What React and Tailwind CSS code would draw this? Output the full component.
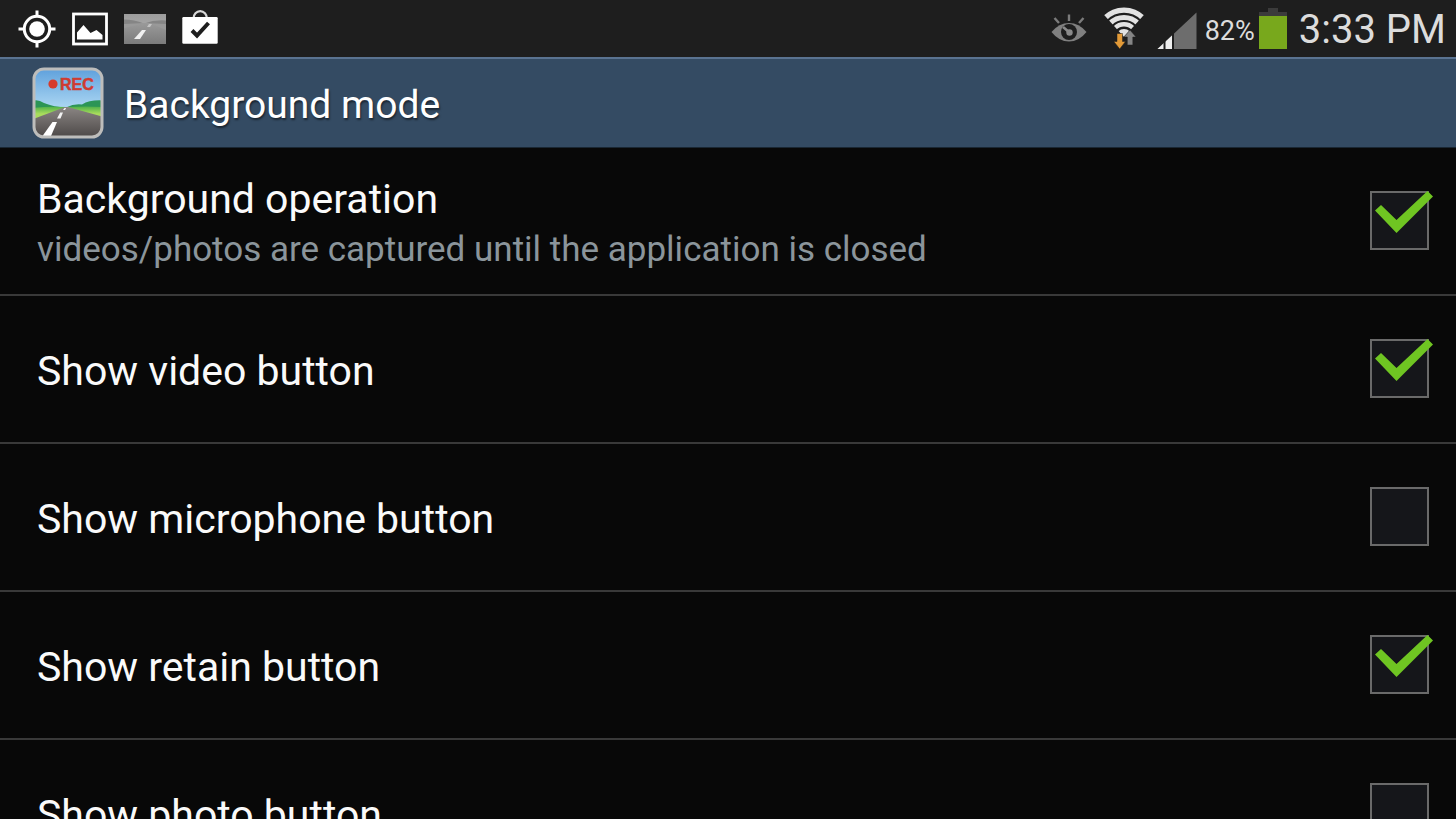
import { useState } from "react";

const OPTIONS = [
  {
    id: "background-operation",
    title: "Background operation",
    summary: "videos/photos are captured until the application is closed",
    enabled: true,
  },
  { id: "video-button", title: "Show video button", enabled: true },
  { id: "microphone-button", title: "Show microphone button", enabled: false },
  { id: "retain-button", title: "Show retain button", enabled: true },
  { id: "photo-button", title: "Show photo button", enabled: false },
];

const LocationIcon = () => (
  <svg className="w-[38px] h-[38px]" viewBox="0 0 38 38" fill="none" stroke="#fff" aria-hidden="true">
    <circle cx="19" cy="19" r="12.7" strokeWidth="3" />
    <circle cx="19" cy="19" r="7.8" fill="#fff" stroke="none" />
    <path d="M19 0.5V7M19 31v6.5M0.5 19H7M31 19h6.5" strokeWidth="3" />
  </svg>
);

const GalleryIcon = () => (
  <svg className="w-9 h-[34px]" viewBox="0 0 36 34" aria-hidden="true">
    <rect x="1.5" y="2" width="33" height="30" fill="none" stroke="#fff" strokeWidth="2.8" />
    <path d="M5 27.500V20.500L11.500 13l7 8 6-3 6 5v4.500z" fill="#fff" />
  </svg>
);

const RoadThumbnail = () => (
  <svg className="w-[42px] h-[30px]" viewBox="0 0 42 30" aria-hidden="true">
    <defs>
      <linearGradient id="thumbSky" x1="0" y1="0" x2="0" y2="1">
        <stop offset="0" stopColor="#9c9c9c" />
        <stop offset="1" stopColor="#b8b8b8" />
      </linearGradient>
      <linearGradient id="thumbRoad" x1="0" y1="0" x2="0" y2="1">
        <stop offset="0" stopColor="#9a9a9a" />
        <stop offset="1" stopColor="#7b7b7b" />
      </linearGradient>
    </defs>
    <rect width="42" height="30" fill="url(#thumbSky)" />
    <path d="M0 5.500q10 0 20 4 11-4 22-3v6H0z" fill="#858585" />
    <path d="M0 10l20-1 22 1v20H0z" fill="#999" />
    <path d="M0 14L21 9h5l16 7v14H0z" fill="url(#thumbRoad)" />
    <path d="M10 25l8-9h4l-6 9z" fill="#f0f0f0" />
    <path d="M23 13l2-3h3l-2 3z" fill="#c4c4c4" />
  </svg>
);

const StoreIcon = () => (
  <svg className="w-9 h-[39px]" viewBox="0 0 36 39" aria-hidden="true">
    <path d="M11.500 9.500a6.700 7.400 0 0 1 13.400 0" fill="none" stroke="#d8d8d8" strokeWidth="2.200" />
    <rect x="0.300" y="8" width="35.400" height="26.800" rx="1.200" fill="#fff" />
    <path d="M10 21.500l5 5 11.500-12.500" fill="none" stroke="#1e1e1e" strokeWidth="4" />
  </svg>
);

const SmartStayIcon = () => (
  <svg className="w-9 h-[30px]" viewBox="0 0 36 30" aria-hidden="true">
    <path d="M3.500 4l4.500 5M18 0.500v6.500M32.500 4L28 9" stroke="#7b7b7b" strokeWidth="2.400" />
    <path d="M0.500 18Q8 9 18 9T35.500 18Q28 27.500 18 27.500T0.500 18z" fill="#808080" />
    <circle cx="18" cy="18" r="8" fill="#1e1e1e" />
    <circle cx="18.500" cy="18.500" r="3.200" fill="#8a8a8a" />
    <path d="M12 13l6 5" stroke="#8a8a8a" strokeWidth="2.600" />
  </svg>
);

const WifiIcon = () => (
  <svg className="w-[42px] h-11" viewBox="-1 0 42 44" aria-hidden="true">
    <defs>
      <clipPath id="wifiFan">
        <path d="M20 30L-3.500 4V-4h47v8z" />
      </clipPath>
    </defs>
    <g clipPath="url(#wifiFan)" fill="none" stroke="#e2e2e2">
      <circle cx="20" cy="30" r="26.900" strokeWidth="5.400" />
      <circle cx="20" cy="30" r="19.600" strokeWidth="5" />
      <circle cx="20" cy="30" r="12.800" strokeWidth="4.400" />
      <circle cx="20" cy="30" r="8" fill="#e2e2e2" stroke="none" />
    </g>
    <path d="M13 26.500h5.500v8h3L15.700 42 9.800 34.500H13z" fill="#e39a37" stroke="#1e1e1e" strokeWidth="0.500" />
    <path d="M23.300 38v-8h-3.500L26 23l6 7h-3.200v8z" fill="#858585" stroke="#1e1e1e" strokeWidth="0.500" />
  </svg>
);

const SignalIcon = () => (
  <svg className="w-10 h-[37px]" viewBox="0 0 40 37" aria-hidden="true">
    <path d="M39.500 0.500V37H0.500z" fill="#6d6d6d" />
    <path d="M0.500 37L15 23.500V37z" fill="#eee" />
    <path d="M7.500 25v12M16 18v19" stroke="#1e1e1e" strokeWidth="2" />
  </svg>
);

const BatteryIcon = () => (
  <svg className="w-7 h-[41px]" viewBox="0 0 28 41" aria-hidden="true">
    <path d="M9 0h10v4h9v4H0V4h9z" fill="#3b3b3b" />
    <rect y="8" width="28" height="33" fill="#78a81c" />
  </svg>
);

const AppIcon = () => (
  <svg className="w-[72px] h-[72px]" viewBox="0 0 72 72" aria-hidden="true">
    <defs>
      <linearGradient id="sky" x1="0" y1="0" x2="0" y2="1">
        <stop offset="0" stopColor="#5b9edb" />
        <stop offset="0.550" stopColor="#a9d5f2" />
      </linearGradient>
      <linearGradient id="road" x1="0" y1="0" x2="0" y2="1">
        <stop offset="0" stopColor="#8a8583" />
        <stop offset="1" stopColor="#494544" />
      </linearGradient>
      <linearGradient id="grass" x1="0" y1="0" x2="0" y2="1">
        <stop offset="0" stopColor="#4fb04a" />
        <stop offset="0.500" stopColor="#a8dc5c" />
      </linearGradient>
      <clipPath id="iconFrame">
        <rect x="2" y="2" width="68" height="68" rx="9" />
      </clipPath>
    </defs>
    <g clipPath="url(#iconFrame)">
      <rect width="72" height="72" fill="url(#sky)" />
      <path d="M0 34q6-2 12 2 10 4 22 4.500 8-4 16-3 8-5 22-4v14H0z" fill="#2c9556" />
      <path d="M0 41q17-2 34-1 20-1 38 0v14H0z" fill="url(#grass)" />
      <path d="M0 52.500L33 40h3L72 50v22H0z" fill="url(#road)" />
      <path d="M10.500 69L20.500 55h4.500l-6 14z" fill="#fff" />
      <path d="M25 51.500l3.200-6h2.800l-2.500 6zM31 43l1.500-2h1.700L33 43z" fill="#f2f2f2" />
    </g>
    <rect x="2" y="2" width="68" height="68" rx="10" fill="none" stroke="#bdbdbb" strokeWidth="3" />
    <circle cx="21" cy="17" r="4.600" fill="#d63a2c" />
    <text
      x="28"
      y="22.500"
      fill="#cf3b31"
      stroke="#cf3b31"
      strokeWidth="0.500"
      fontFamily="Liberation Sans, sans-serif"
      fontSize="16"
      fontWeight="700"
    >
      REC
    </text>
  </svg>
);

const StatusBar = () => (
  <div className="flex h-[57px] shrink-0 items-center justify-between bg-[#1e1e1e] pl-[18px] pr-[10px]">
    <div className="flex items-center gap-4">
      <LocationIcon />
      <GalleryIcon />
      <RoadThumbnail />
      <StoreIcon />
    </div>
    <div className="flex items-center text-[#dcdcdc]">
      <SmartStayIcon />
      <div className="ml-4">
        <WifiIcon />
      </div>
      <div className="ml-3 mt-1">
        <SignalIcon />
      </div>
      <span className="ml-2 mt-1 text-[27px] leading-8">82%</span>
      <div className="ml-1">
        <BatteryIcon />
      </div>
      <span className="ml-3 pt-0.5 text-[40px] leading-[48px]">3:33 PM</span>
    </div>
  </div>
);

const OptionRow = ({ option, checked, onToggle }) => (
  <li className="border-b-2 border-[#393939]">
    <label htmlFor={option.id} className="flex h-[146px] items-center justify-between pl-[37px] pr-[27px]">
      <span className="flex flex-col gap-0.5 pt-1">
        <span className="text-[41px] leading-[52px] text-[#fafafa]">{option.title}</span>
        {option.summary && (
          <span className="text-[35px] leading-[46px] text-[#8b959b]">{option.summary}</span>
        )}
      </span>
      <span className="relative mb-0.5 size-[59px] shrink-0">
        <input
          id={option.id}
          type="checkbox"
          checked={checked}
          onChange={onToggle}
          className="block size-full appearance-none border-2 border-[#6a6a6a] bg-[#15161a]"
        />
        {checked && (
          <svg
            className="pointer-events-none absolute inset-0 size-full overflow-visible"
            viewBox="0 0 59 59"
            aria-hidden="true"
          >
            <path d="M5 19.500l6-5.500L26.500 29 57.500 0l5.500 5.500L26.500 42z" fill="#6fc522" />
          </svg>
        )}
      </span>
    </label>
  </li>
);

const App = () => {
  const [enabled, setEnabled] = useState(() =>
    Object.fromEntries(OPTIONS.map((o) => [o.id, o.enabled]))
  );

  const toggle = (id) => setEnabled((prev) => ({ ...prev, [id]: !prev[id] }));

  return (
    <div className="flex h-screen flex-col overflow-hidden bg-[#080808] font-[Roboto,sans-serif]">
      <StatusBar />

      <header className="flex h-[91px] shrink-0 items-center gap-5 border-t-2 border-b border-t-[#5a7391] border-b-[#1a2733] bg-[#344b63] pl-8">
        <AppIcon />
        <h1 className="pt-1 text-[39px] leading-[48px] text-white [text-shadow:1px_2px_2px_rgba(0,0,0,0.5)]">
          Background mode
        </h1>
      </header>

      {/* Scrolls under the header, the last row runs off the screen */}
      <ul className="min-h-0 flex-1 overflow-y-auto [scrollbar-width:none]">
        {OPTIONS.map((option) => (
          <OptionRow
            key={option.id}
            option={option}
            checked={enabled[option.id]}
            onToggle={() => toggle(option.id)}
          />
        ))}
      </ul>
    </div>
  );
};

export default App;
